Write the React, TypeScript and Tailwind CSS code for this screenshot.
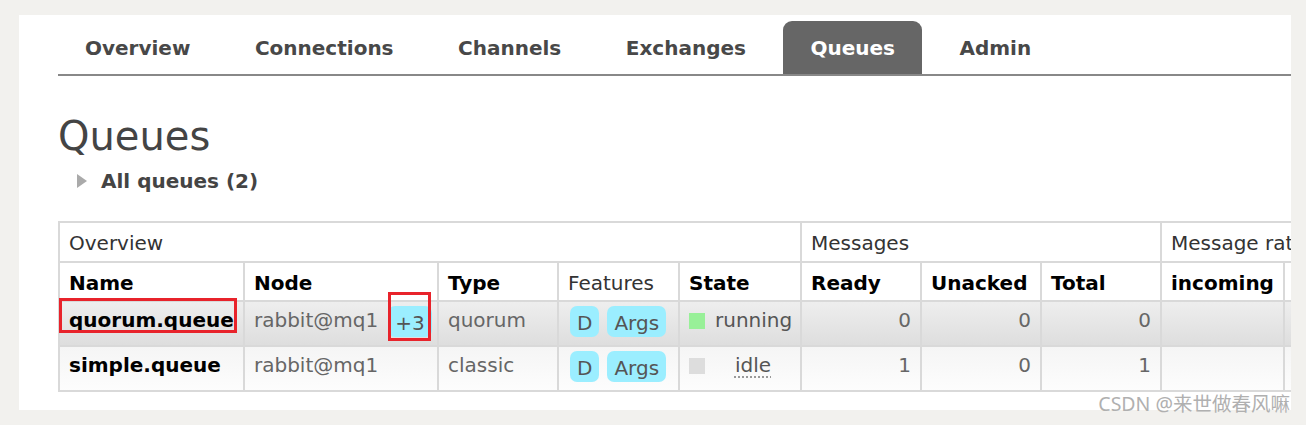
import React from "react";

const font = { fontFamily: '"DejaVu Sans", Verdana, sans-serif' };

function Pill({ children }: { children: React.ReactNode }) {
  return (
    <span className="inline-block h-[31px] rounded-[7px] bg-[#9beeff] px-[7px] pt-[5px] text-[20px] leading-[24px] text-[#555]">
      {children}
    </span>
  );
}

export default function App() {
  const tab = "flex h-full items-center px-[27px] text-[20px] font-bold text-[#484848]";
  const cell = "shrink-0 border-r-2 border-b-2 border-[#d9d9d9]";
  const head = "shrink-0 border-r-2 border-b-2 border-[#d9d9d9] h-[39px] px-[9px] pt-[8px] text-[20px] leading-[24px]";
  const body = "shrink-0 border-r-2 border-b-2 border-[#d9d9d9] h-[45px] px-[9px] pt-[4px] text-[20px] leading-[24px] text-[#666]";
  return (
    <div className="relative min-h-[425px] w-[1306px] bg-[#f2f1ee] pt-[15px]" style={font}>
      <div className="ml-[19px] h-[395px] w-[1272px] overflow-hidden bg-white pl-[39px] pt-[6px]">
        {/* Tabs */}
        <div className="flex h-[55px] items-end gap-[10.5px] border-b-2 border-[#888]">
          <div className={tab}>Overview</div>
          <div className={tab}>Connections</div>
          <div className={tab}>Channels</div>
          <div className={tab}>Exchanges</div>
          <div className="flex h-full items-center rounded-t-[9px] bg-[#666] px-[27px] text-[20px] font-bold text-white">
            Queues
          </div>
          <div className={tab}>Admin</div>
        </div>

        <h1 className="mt-[36px] text-[40px] font-normal leading-[48px] text-[#444]">Queues</h1>

        <div className="mt-[9px] flex items-center">
          <span className="ml-[19px] h-0 w-0 border-y-[7px] border-l-[10px] border-y-transparent border-l-[#aaa]" />
          <span className="ml-[14px] text-[20px] font-bold leading-[24px] text-[#444]">All queues (2)</span>
        </div>

        {/* Table */}
        <div className="mt-[28px] w-max border-l-2 border-t-2 border-[#d9d9d9]">
          <div className="flex">
            <div className={`${cell} h-[40px] w-[742px] px-[9px] pt-[8px] text-[20px] leading-[24px] text-[#333]`}>Overview</div>
            <div className={`${cell} h-[40px] w-[360px] px-[9px] pt-[8px] text-[20px] leading-[24px] text-[#333]`}>Messages</div>
            <div className={`${cell} h-[40px] w-[243px] overflow-hidden whitespace-nowrap px-[9px] pt-[8px] text-[20px] leading-[24px] text-[#333]`}>Message rat</div>
          </div>
          <div className="flex">
            <div className={`${head} w-[185px] font-bold text-black`}>Name</div>
            <div className={`${head} w-[194px] font-bold text-black`}>Node</div>
            <div className={`${head} w-[120px] font-bold text-black`}>Type</div>
            <div className={`${head} w-[121px] text-[#333]`}>Features</div>
            <div className={`${head} w-[122px] font-bold text-black`}>State</div>
            <div className={`${head} w-[120px] font-bold text-black`}>Ready</div>
            <div className={`${head} w-[120px] font-bold text-black`}>Unacked</div>
            <div className={`${head} w-[120px] font-bold text-black`}>Total</div>
            <div className={`${head} w-[123px] font-bold text-black`}>incoming</div>
            <div className={`${head} w-[120px]`} />
          </div>
          {/* Row 1 */}
          <div className="flex bg-gradient-to-b from-[#eeeeee] to-[#dddddd]">
            <div className={`${body} relative w-[185px]`}>
              <span className="block pt-[2px] font-bold text-black">quorum.queue</span>
              <span className="absolute left-[-1px] top-[-4px] h-[35px] w-[178px] border-[3px] border-[#e8232b]" />
            </div>
            <div className={`${body} relative w-[194px]`}>
              <div className="flex items-start">
                <span className="pt-[2px]">rabbit@mq1</span>
                <span className="ml-[10px]">
                  <Pill>+3</Pill>
                </span>
              </div>
              <span className="absolute left-[143px] top-[-10px] h-[49px] w-[43px] border-[3px] border-[#e8232b]" />
            </div>
            <div className={`${body} w-[120px]`}>
              <span className="block pt-[2px]">quorum</span>
            </div>
            <div className={`${body} w-[121px] pl-[11px]`}>
              <div className="flex gap-[8px]">
                <Pill>D</Pill>
                <Pill>Args</Pill>
              </div>
            </div>
            <div className={`${body} w-[122px]`}>
              <div className="flex items-start pt-[2px]">
                <span className="mt-[5px] h-[16px] w-[16px] shrink-0 bg-[#98f098]" />
                <span className="ml-[10px] w-[77px] text-center text-[#555]">running</span>
              </div>
            </div>
            <div className={`${body} w-[120px] text-right`}>
              <span className="block pt-[2px]">0</span>
            </div>
            <div className={`${body} w-[120px] text-right`}>
              <span className="block pt-[2px]">0</span>
            </div>
            <div className={`${body} w-[120px] text-right`}>
              <span className="block pt-[2px]">0</span>
            </div>
            <div className={`${body} w-[123px]`} />
            <div className={`${body} w-[120px]`} />
          </div>
          {/* Row 2 */}
          <div className="flex bg-gradient-to-b from-[#f5f5f5] to-[#fdfdfd]">
            <div className={`${body} w-[185px]`}>
              <span className="block pt-[2px] font-bold text-black">simple.queue</span>
            </div>
            <div className={`${body} w-[194px]`}>
              <span className="block pt-[2px]">rabbit@mq1</span>
            </div>
            <div className={`${body} w-[120px]`}>
              <span className="block pt-[2px]">classic</span>
            </div>
            <div className={`${body} w-[121px] pl-[11px]`}>
              <div className="flex gap-[8px]">
                <Pill>D</Pill>
                <Pill>Args</Pill>
              </div>
            </div>
            <div className={`${body} w-[122px]`}>
              <div className="flex items-start pt-[2px]">
                <span className="mt-[5px] h-[16px] w-[16px] shrink-0 bg-[#dddddd]" />
                <span className="ml-[10px] w-[77px] text-center text-[#555]">
                  <span className="underline decoration-[#999] decoration-dotted underline-offset-[4px]">idle</span>
                </span>
              </div>
            </div>
            <div className={`${body} w-[120px] text-right`}>
              <span className="block pt-[2px]">1</span>
            </div>
            <div className={`${body} w-[120px] text-right`}>
              <span className="block pt-[2px]">0</span>
            </div>
            <div className={`${body} w-[120px] text-right`}>
              <span className="block pt-[2px]">1</span>
            </div>
            <div className={`${body} w-[123px]`} />
            <div className={`${body} w-[120px]`} />
          </div>
        </div>
      </div>

      <div
        className="absolute right-[16px] top-[391px] text-[19.5px] leading-[26px] text-[#b0b0b0]"
        style={{ fontFamily: '"Noto Sans", "Noto Sans CJK SC", sans-serif' }}
      >
        CSDN @来世做春风嘛
      </div>
    </div>
  );
}
